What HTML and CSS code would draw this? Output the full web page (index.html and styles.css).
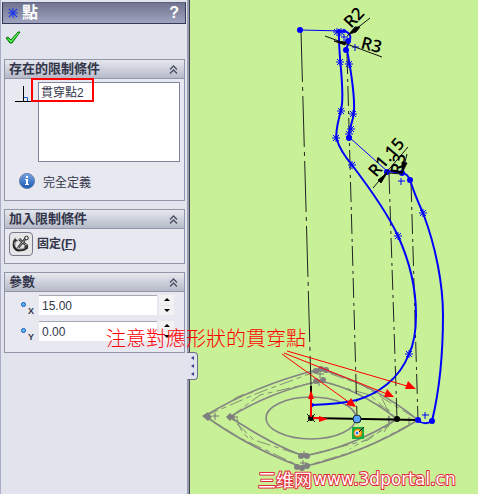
FILE: index.html
```html
<!DOCTYPE html>
<html lang="zh-Hant">

<head>
    <meta charset="UTF-8">
    <meta name="viewport" content="width=device-width, initial-scale=1.0">
    <title>點</title>
    <link rel="stylesheet" href="styles.css">
</head>

<body>

    <div class="app">
        <!-- Property panel -->
        <aside class="panel">
            <header class="panel-title">
                <svg width="10" height="10" viewBox="0 0 10 10" stroke="#1c38e8" stroke-width="1.2">
                    <path d="M5 0V10M0 5H10M1 1L9 9M9 1L1 9"/>
                </svg>
                <h1>點</h1>
                <button type="button" class="help">?</button>
            </header>

            <button type="button" class="ok" aria-label="確定">
                <svg width="16" height="14" viewBox="0 0 16 14">
                    <path d="M1 7L3 6L6 9L13 1L15 1L7 12H5Z" fill="#20d820" stroke="#087008"/>
                    <path d="M3 7.5L6 10.5L13.5 2" fill="none" stroke="#7cf87c"/>
                </svg>
            </button>

            <section class="group">
                <h2><label for="relations">存在的限制條件</label>
                    <button type="button" class="fold" aria-label="收合">
                        <svg width="9" height="9" viewBox="0 0 9 9"><path d="M1 4.5L4.5 1L8 4.5M1 8.5L4.5 5L8 8.5"/></svg>
                    </button>
                </h2>
                <div class="relations">
                    <svg width="17" height="18" viewBox="0 0 17 18" fill="none">
                        <path d="M9 12.5H12.5V16" stroke="#1b62d0"/>
                        <path d="M8.5 1V17M0 16.5H17" stroke="#000"/>
                    </svg>
                    <div class="list">
                        <select id="relations" size="4">
                            <option>貫穿點2</option>
                        </select>
                        <span class="mark"></span>
                    </div>
                </div>
                <p class="status">
                    <svg width="16" height="16" viewBox="0 0 16 16">
                        <defs>
                            <linearGradient id="info" x1="0" y1="0" x2="0" y2="1">
                                <stop offset="0" stop-color="#78a4e0"/>
                                <stop offset="1" stop-color="#1858b8"/>
                            </linearGradient>
                        </defs>
                        <circle cx="8" cy="8" r="7.5" fill="url(#info)" stroke="#607ca8"/>
                        <path d="M7 3H9V5H7ZM6 6H9V11H10V12H6V11H7V7H6Z" fill="#fff"/>
                    </svg>
                    完全定義
                </p>
            </section>

            <section class="group">
                <h2>加入限制條件
                    <button type="button" class="fold" aria-label="收合">
                        <svg width="9" height="9" viewBox="0 0 9 9"><path d="M1 4.5L4.5 1L8 4.5M1 8.5L4.5 5L8 8.5"/></svg>
                    </button>
                </h2>
                <div class="fix">
                    <button type="button" id="fix">
                        <svg width="18" height="18" viewBox="0 0 18 18" fill="none">
                            <path d="M14 3L6 13M7 4L14 10" stroke="#222" stroke-width="2.4"/>
                            <path d="M14 3L6 13M7 4L14 10" stroke="#ccc" stroke-width="0.8"/>
                            <path d="M3 5C0 12 4 16 8 15C11 15 14 14 15 11" stroke="#222" stroke-width="2.6"/>
                            <path d="M3 6C2 11 4 14 8 14C11 14 13 13 14 12" stroke="#bbb"/>
                            <path d="M1 7L3 3L6 6ZM12 12L16 9L16 14Z" fill="#333"/>
                            <circle cx="14.5" cy="3" r="1.8" fill="#eee" stroke="#222"/>
                        </svg>
                    </button>
                    <label for="fix">固定(<u>F</u>)</label>
                </div>
            </section>

            <section class="group">
                <h2>參數
                    <button type="button" class="fold" aria-label="收合">
                        <svg width="9" height="9" viewBox="0 0 9 9"><path d="M1 4.5L4.5 1L8 4.5M1 8.5L4.5 5L8 8.5"/></svg>
                    </button>
                </h2>
                <div class="params">
                    <div class="param">
                        <label for="px"><i class="dot"></i>X</label>
                        <input type="text" id="px" value="15.00">
                        <div class="spin">
                            <button type="button" aria-label="增加 X"><svg width="6" height="3"><path d="M0 3L3 0L6 3Z"/></svg></button>
                            <button type="button" aria-label="減少 X"><svg width="6" height="3"><path d="M0 0L3 3L6 0Z"/></svg></button>
                        </div>
                    </div>
                    <div class="param">
                        <label for="py"><i class="dot"></i>Y</label>
                        <input type="text" id="py" value="0.00">
                        <div class="spin">
                            <button type="button" aria-label="增加 Y"><svg width="6" height="3"><path d="M0 3L3 0L6 3Z"/></svg></button>
                            <button type="button" aria-label="減少 Y"><svg width="6" height="3"><path d="M0 0L3 3L6 0Z"/></svg></button>
                        </div>
                    </div>
                </div>
            </section>

            <button type="button" class="handle" aria-label="隱藏面板">
                <svg width="4" height="20" viewBox="0 0 4 20" fill="#3f3f95">
                    <path d="M0 2L3 0V4ZM0 10L3 8V12ZM0 18L3 16V20Z"/>
                </svg>
            </button>
            <p class="note">注意對應形狀的貫穿點</p>
        </aside>

        <!-- Sketch area -->
        <main class="sketch">
            <svg viewBox="190 0 288 494">
                <defs>
                    <path id="star" d="M-4 0H4M0 -4V4M-3 -3L3 3M3 -3L-3 3"/>
                    <path id="plus" d="M-3 0H4M0 -3V4"/>
                </defs>

                <!-- base profiles -->
                <g class="base">
                    <path d="M205 416Q253 386 320 369Q377 386 418 420Q365 453 302 467Q253 450 205 416Z"/>
                    <path d="M230 417Q270 392 320 381Q359 389 397 419Q353 447 304 456Q272 445 230 417Z"/>
                    <ellipse cx="311" cy="418" rx="45" ry="21"/>
                </g>
                <g class="base-poly">
                    <path d="M205 416L258 393L320 370L362 385L418 420L365 448L302 467L240 438Z"/>
                    <path d="M230 417L260 395L320 381L370 395L397 419L368 440L304 456L254 440Z"/>
                    <path d="M232 401Q236 395 256 392M237 418Q239 433 252 440M382 399Q394 418 384 432M370 401L389 410V426L350 449"/>
                </g>
                <g class="base-points">
                    <path d="M202 416L208 412L212 417L208 421ZM226 417L230 413L234 417L230 421Z"/>
                    <circle cx="316" cy="371" r="3"/>
                    <circle cx="321" cy="369" r="3"/>
                    <circle cx="326" cy="370" r="3"/>
                    <circle cx="316" cy="381" r="3"/>
                    <circle cx="323" cy="380" r="3"/>
                    <circle cx="297" cy="467" r="3"/>
                    <circle cx="302" cy="468" r="3"/>
                    <circle cx="307" cy="466" r="3"/>
                    <circle cx="301" cy="456" r="3"/>
                    <circle cx="307" cy="456" r="3"/>
                </g>
                <g class="base-cross">
                    <use href="#plus" x="215" y="416"/>
                    <use href="#plus" x="234" y="417"/>
                    <use href="#plus" x="320" y="374"/>
                    <use href="#plus" x="319" y="382"/>
                    <use href="#plus" x="304" y="454"/>
                    <use href="#plus" x="303" y="463"/>
                    <use href="#plus" x="389" y="419"/>
                    <use href="#plus" x="409" y="420"/>
                </g>

                <!-- centre lines -->
                <g class="axis">
                    <path class="axis-long" d="M301 31L311 386"/>
                    <path d="M347 54L357 418M389 174L397 419M411 182L418 420"/>
                </g>
                <path class="ground" d="M311 386V418L418 420"/>

                <!-- side profile -->
                <path class="line" d="M300 30L344 31M349 137L387 171"/>
                <path class="curve" d="M339 31C338 54 344 82 342 104C340 118 334 131 337 140C340 150 347 159 352 165C368 186 387 212 398 236C409 260 416 287 416 315C416 332 414 344 409 354C399 380 377 394 357 400Q341 404 312 405"/>
                <path class="curve" d="M347 50C349 61 355 91 354 111C353 124 348 130 349 137"/>
                <path class="curve" d="M337 31H345Q352 34 350 40L346 49M387 171L402 173Q407 173 410 180C414 193 419 204 423 213C436 247 443 285 443 315C443 350 441 384 432 421Q425 426 417 420"/>
                <g class="stars">
                    <use href="#star" x="337" y="32"/>
                    <use href="#star" x="341" y="32"/>
                    <use href="#star" x="340" y="62"/>
                    <use href="#star" x="349" y="64"/>
                    <use href="#star" x="341" y="111"/>
                    <use href="#star" x="353" y="114"/>
                    <use href="#star" x="351" y="129"/>
                    <use href="#star" x="349" y="134"/>
                    <use href="#star" x="336" y="138"/>
                    <use href="#star" x="352" y="165"/>
                    <use href="#star" x="398" y="236"/>
                    <use href="#star" x="423" y="213"/>
                    <use href="#star" x="409" y="354"/>
                    <use href="#plus" x="344" y="37"/>
                    <use href="#plus" x="355" y="47"/>
                    <use href="#plus" x="401" y="181"/>
                    <use href="#plus" x="425" y="415"/>
                </g>
                <g class="points">
                    <circle cx="300" cy="30" r="3"/>
                    <circle cx="344" cy="31" r="2"/>
                    <circle cx="348" cy="41" r="3"/>
                    <circle cx="346" cy="50" r="3"/>
                    <circle cx="349" cy="138" r="3"/>
                    <circle cx="387" cy="172" r="3"/>
                    <circle cx="402" cy="173" r="3"/>
                    <circle cx="410" cy="180" r="3"/>
                    <circle cx="312" cy="405" r="2"/>
                    <circle cx="418" cy="420" r="3"/>
                    <circle cx="432" cy="421" r="3"/>
                </g>

                <!-- dimensions -->
                <g class="dim-lines">
                    <path d="M347 36L370 18M325 36L382 57M373 188L408 147M388 173L402 174M402 174L407 154"/>
                    <path d="M349 34L355 27L360 27L356 32ZM334 41L346 42L345 45ZM387 173L378 180L381 183ZM402 173L402 162L407 163Z"/>
                </g>
                <g class="dim-text">
                    <text transform="translate(351 29) rotate(-46)">R2</text>
                    <text transform="translate(360 48) rotate(15)">R3</text>
                    <text transform="translate(376 178) rotate(-49)">R1.15</text>
                    <text transform="translate(402 175) rotate(-79)">R3</text>
                </g>

                <!-- origin and pierce points -->
                <path class="x-mark" d="M307 414L315 422M315 414L307 422"/>
                <circle cx="311" cy="418" r="3"/>
                <circle cx="397" cy="419" r="3"/>
                <path class="origin" d="M311 417V396M313 418H320"/>
                <path class="red-fill" d="M311 390L314 399H308ZM328 419L319 416V422Z"/>
                <circle class="picked" cx="357" cy="419" r="4"/>
                <rect x="352" y="427" width="12" height="12" fill="#12ad42"/>
                <circle class="pierce" cx="358" cy="433" r="4"/>
                <circle cx="357" cy="433" r="2" fill="#2e6fe0" stroke="#fff"/>
                <path d="M359 432L364 427" stroke="#111"/>

                <!-- pointers -->
                <path class="pointer" d="M282 354L350 403M284 353L387 394M287 351L407 386"/>
                <path class="red-fill" d="M356 407L346 405L351 398ZM394 397L384 397L387 389ZM416 389L405 389L408 381Z"/>

                <text class="brand" y="487"><tspan class="brand-cjk" x="258">三维网</tspan><tspan x="313" dy="-2">www.3dportal.cn</tspan></text>
            </svg>
        </main>
    </div>

</body>

</html>
```

FILE: styles.css
```css
* {
    margin: 0;
    padding: 0;
    box-sizing: border-box;
}

body {
    font-family: "Liberation Sans", "Noto Sans CJK TC", sans-serif;
    font-size: 12px;
    color: #33364a;
    background-color: #c8f096;
}

button {
    border: none;
    background: none;
    font: inherit;
    color: inherit;
    cursor: pointer;
}

svg {
    display: block;
    flex: none;
}

.app {
    display: flex;
    min-height: 100vh;
}

/* Property panel */
.panel {
    position: relative;
    z-index: 1;
    flex: none;
    display: flex;
    flex-direction: column;
    width: 190px;
    padding: 2px 2px 0 1px;
    border-left: 1px solid #a9adc8;
    border-right: 1px solid #404452;
    box-shadow: inset -2px 0 #9a9eb0;
    background-color: #e1e4ec;
}

.panel-title {
    display: flex;
    align-items: center;
    gap: 4px;
    height: 22px;
    margin-right: 1px;
    padding: 0 6px 0 5px;
    border: 1px solid #343858;
    border-top-color: #5c6082;
    background: linear-gradient(#71748f, #a0a3bd);
    color: #fff;
}

.panel-title h1 {
    flex: 1;
    font-size: 16px;
    line-height: 20px;
}

.help {
    font-size: 16px;
    font-weight: bold;
}

.ok {
    align-self: flex-start;
    margin: 7px 0 14px 3px;
}

/* Collapsible groups */
.group {
    margin: 0 2px 8px 2px;
    border: 1px solid #9295a8;
    background-color: #e8e8f0;
}

.group h2 {
    display: flex;
    align-items: center;
    justify-content: space-between;
    height: 19px;
    padding: 0 6px 0 4px;
    border-bottom: 1px solid #9295a8;
    background: linear-gradient(#e6e8ee, #b6bac9);
    font-size: 13px;
    line-height: 18px;
}

.fold svg {
    fill: none;
    stroke: #4a4d60;
    stroke-width: 1.3;
}

.relations {
    display: flex;
    gap: 6px;
    padding: 3px 4px 0 10px;
}

.relations > svg {
    margin-top: 3px;
}

.list {
    position: relative;
    flex: 1;
}

.list select {
    display: block;
    width: 100%;
    height: 80px;
    border: 1px solid #8085a0;
    border-radius: 0;
    outline: none;
    overflow: hidden;
    background-color: #fff;
    font: inherit;
    color: inherit;
}

.list option {
    padding: 0 2px;
    line-height: 18px;
}

.mark {
    position: absolute;
    top: -4px;
    left: -7px;
    width: 63px;
    height: 24px;
    border: 2px solid #f00;
}

.status {
    display: flex;
    align-items: center;
    gap: 8px;
    height: 38px;
    padding-left: 14px;
}

.fix {
    display: flex;
    align-items: flex-start;
    gap: 4px;
    height: 34px;
    padding: 3px 4px;
    font-weight: bold;
    line-height: 24px;
}

.fix button {
    padding: 2px;
    border: 1px solid #77798a;
    border-radius: 4px;
    background-color: #e6e6e6;
}

.params {
    display: grid;
    gap: 6px;
    padding: 3px 10px 11px 16px;
}

.param {
    display: flex;
    height: 20px;
}

.param label {
    display: flex;
    align-items: flex-end;
    width: 18px;
    font-size: 9px;
    font-weight: bold;
    line-height: 8px;
}

.dot {
    width: 5px;
    height: 5px;
    margin: 0 2px 8px 0;
    border: 1px solid #1755b8;
    border-radius: 50%;
    background-color: #58b8ff;
}

.param input {
    flex: 1;
    width: 0;
    padding: 0 3px;
    border: none;
    border-top: 1px solid #a5a7b4;
    background-color: #fff;
    font: inherit;
    color: inherit;
}

.spin {
    display: grid;
    gap: 1px;
    width: 15px;
    margin-left: 2px;
}

.spin button {
    display: flex;
    align-items: center;
    justify-content: center;
    background-color: #f2f2f2;
}

/* Things that hang over the sketch */
.handle {
    position: absolute;
    top: 352px;
    right: -9px;
    width: 11px;
    height: 28px;
    padding-left: 4px;
    border: 1px solid #6c7084;
    border-left: none;
    border-radius: 0 4px 4px 0;
    background-color: #e1e4ec;
}

.note {
    position: absolute;
    top: 324px;
    left: 105px;
    font-family: "Noto Sans CJK TC", sans-serif;
    font-size: 20px;
    font-weight: 300;
    line-height: 28px;
    color: #f00;
    white-space: nowrap;
}

/* Sketch */
.sketch {
    flex: 1;
    min-width: 0;
}

.sketch > svg {
    width: 100%;
}

.base,
.base-poly,
.line,
.curve,
.ground,
.axis,
.pointer,
.origin {
    fill: none;
}

.base {
    stroke: #848484;
    stroke-width: 1.6;
}

.base-poly {
    stroke: #849176;
    stroke-dasharray: 14 4 5 4;
}

.base-points {
    fill: #808080;
}

.base-cross {
    stroke: #777;
}

.axis {
    stroke: #222;
    stroke-dasharray: 20 5 3 4;
}

.axis-long {
    stroke-dasharray: 51 5 4 5;
}

.ground {
    stroke: #000;
    stroke-width: 2;
}

.line,
.stars {
    stroke: #00f;
}

.curve {
    stroke: #00f;
    stroke-width: 2;
}

.points {
    fill: #00f;
}

.dim-lines,
.x-mark {
    stroke: #111;
}

.dim-text {
    font-family: "Open Sans", sans-serif;
    font-size: 17px;
    font-weight: 600;
}

.origin {
    stroke: #f00;
    stroke-width: 2;
}

.red-fill {
    fill: #f00;
}

.picked {
    fill: #58a6ff;
    stroke: #123;
}

.pierce {
    fill: #ffb020;
    stroke: #e87800;
}

.pointer {
    stroke: #f00;
}

.brand {
    font-family: "DejaVu Sans", sans-serif;
    font-size: 17px;
    fill: #fff;
    stroke: #e02838;
    stroke-width: 2;
    stroke-linejoin: round;
    paint-order: stroke;
}

.brand-cjk {
    font-family: "Noto Sans CJK SC", sans-serif;
    font-size: 18px;
}
```
